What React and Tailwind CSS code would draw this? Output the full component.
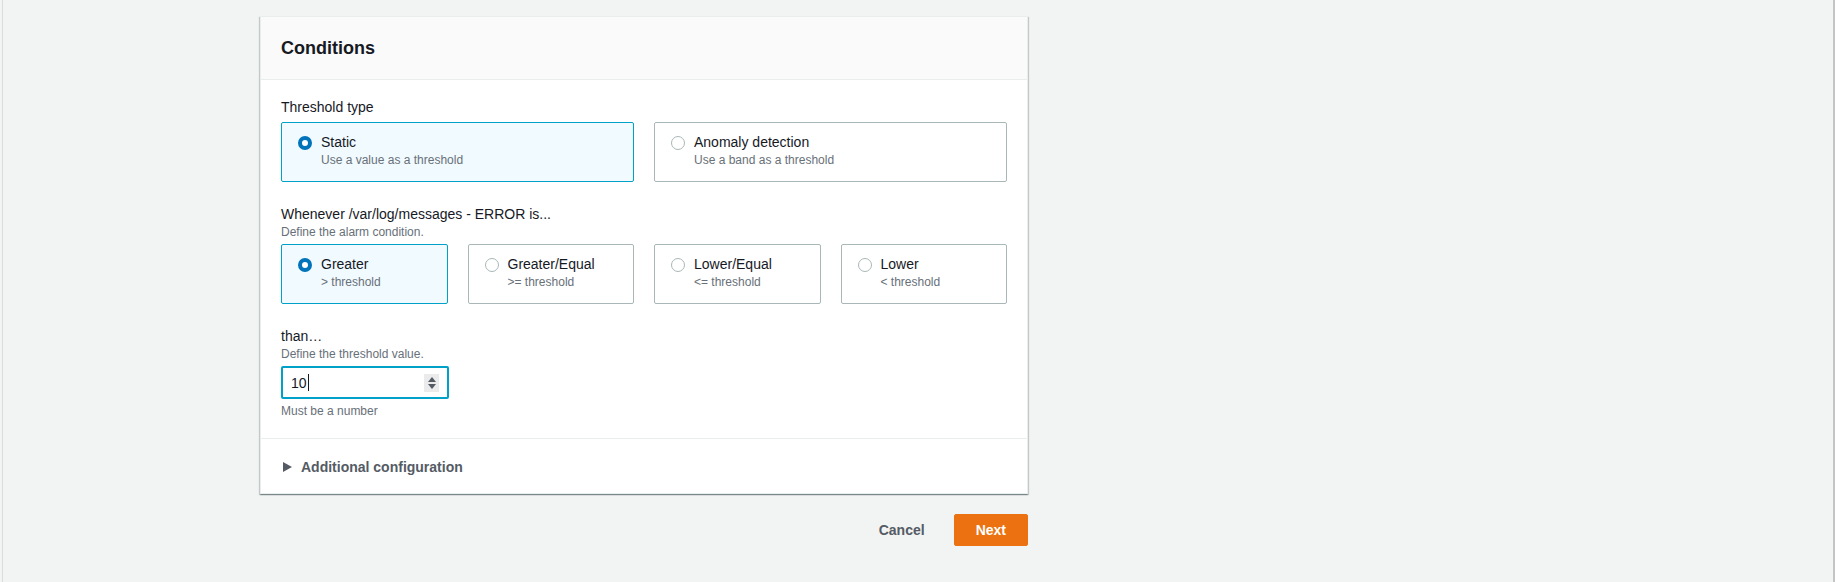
import React from 'react';

const Radio = ({ checked }) =>
  checked ? (
    <span className="mt-1 block h-[14px] w-[14px] shrink-0 rounded-full border-[4px] border-[#0073bb] bg-white" />
  ) : (
    <span className="mt-1 block h-[14px] w-[14px] shrink-0 rounded-full border border-[#aab7b8] bg-white" />
  );

const Tile = ({ title, desc, selected }) => (
  <div
    className={`flex items-start rounded-[2px] border pl-4 pr-3 pt-[9px] pb-[13px] ${
      selected ? 'border-[#00a1c9] bg-[#f1faff]' : 'border-[#aab7b8] bg-white'
    }`}
  >
    <Radio checked={selected} />
    <div className="ml-[9px]">
      <div className="text-[14px] leading-5 text-[#16191f]">{title}</div>
      <div className="text-[12px] leading-4 text-[#687078]">{desc}</div>
    </div>
  </div>
);

const Label = ({ title, desc }) => (
  <div className={desc ? 'mb-1' : 'mb-[5px]'}>
    <div className="text-[14px] leading-5 text-[#16191f]">{title}</div>
    {desc && <div className="text-[12px] leading-4 text-[#687078]">{desc}</div>}
  </div>
);

const App = () => {
  const operators = [
    { title: 'Greater', desc: '> threshold', selected: true },
    { title: 'Greater/Equal', desc: '>= threshold' },
    { title: 'Lower/Equal', desc: '<= threshold' },
    { title: 'Lower', desc: '< threshold' },
  ];

  return (
    <div className="min-h-[582px] border-r-2 border-[#c4c4c4] bg-[#f2f3f3] pl-[2px] font-['Liberation_Sans',Arial,sans-serif]">
      <div className="min-h-[582px] border-l border-[#d8dcdc] pl-[257px] pt-4">
        <div className="w-[768px]">
          {/* Card */}
          <div className="border border-[#eaeded] bg-white shadow-[0_1px_1px_0_rgba(0,28,36,0.3),1px_1px_1px_0_rgba(0,28,36,0.15),-1px_1px_1px_0_rgba(0,28,36,0.15)]">
            <div className="border-b border-[#eaeded] bg-[#fafafa] px-5 py-5">
              <h2 className="text-[18px] font-bold leading-[22px] text-[#16191f]">Conditions</h2>
            </div>

            <div className="px-5 pt-[17px] pb-[19px]">
              <Label title="Threshold type" />
              <div className="grid grid-cols-2 gap-5">
                <Tile title="Static" desc="Use a value as a threshold" selected />
                <Tile title="Anomaly detection" desc="Use a band as a threshold" />
              </div>

              <div className="mt-[22px]">
                <Label title="Whenever /var/log/messages - ERROR is..." desc="Define the alarm condition." />
                <div className="grid grid-cols-4 gap-5">
                  {operators.map((op) => (
                    <Tile key={op.title} {...op} />
                  ))}
                </div>
              </div>

              <div className="mt-[22px]">
                <Label title="than…" desc="Define the threshold value." />
                <div className="flex h-[33px] w-[168px] items-center rounded-[2px] border-2 border-[#00a1c9] bg-white pl-2 pr-2">
                  <span className="text-[14px] leading-5 text-[#16191f]">10</span>
                  <span className="ml-px h-[17px] w-px bg-[#16191f]" />
                  <div className="ml-auto flex h-[18px] w-[15px] flex-col items-center justify-center gap-[2px] bg-[#ebebeb]">
                    <span className="h-0 w-0 border-x-[4px] border-b-[5px] border-x-transparent border-b-[#545b64]" />
                    <span className="h-0 w-0 border-x-[4px] border-t-[5px] border-x-transparent border-t-[#545b64]" />
                  </div>
                </div>
                <div className="mt-1 text-[12px] leading-4 text-[#687078]">Must be a number</div>
              </div>
            </div>

            <div className="flex items-center border-t border-[#eaeded] px-5 pt-[17px] pb-[15px]">
              <span className="ml-[2px] h-0 w-0 border-y-[5px] border-l-[9px] border-y-transparent border-l-[#545b64]" />
              <span className="ml-[9px] text-[14px] font-bold leading-[22px] text-[#545b64]">
                Additional configuration
              </span>
            </div>
          </div>

          {/* Actions */}
          <div className="mt-5 flex items-center justify-end gap-2">
            <button className="rounded-[2px] border border-transparent px-5 py-1 text-[14px] font-bold leading-[22px] text-[#545b64]">
              Cancel
            </button>
            <button className="rounded-[2px] border border-[#ec7211] bg-[#ec7211] px-[21px] py-1 text-[14px] font-bold leading-[22px] text-white">
              Next
            </button>
          </div>
        </div>
      </div>
    </div>
  );
};

export default App;
